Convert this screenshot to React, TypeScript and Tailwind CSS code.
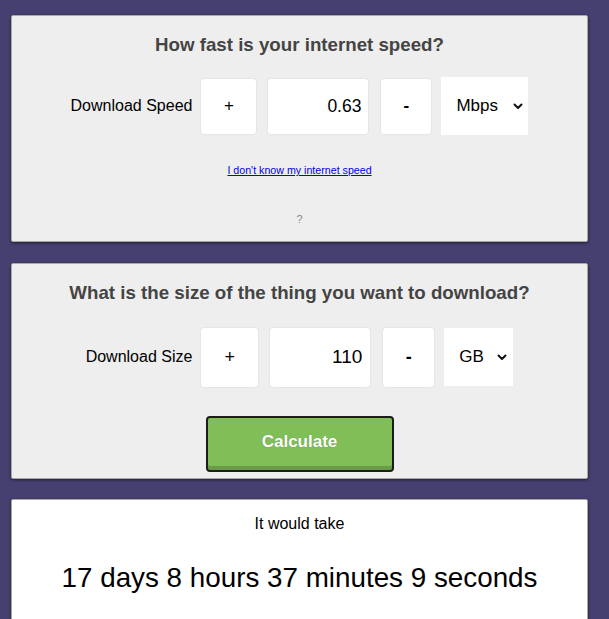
import React from 'react';

const Chevron = () => <svg width="10" height="7" viewBox="0 0 10 7" className="shrink-0">
    <path d="M1.5 1.5 L5 5 L8.5 1.5" fill="none" stroke="#111" strokeWidth="2" strokeLinecap="round" strokeLinejoin="round" />
  </svg>;

const Box = ({
  children,
  className
}: any) => <div className={`flex items-center justify-center bg-white rounded-[3px] shadow-[0_0_2px_rgba(0,0,0,0.12)] ${className}`}>
    {children}
  </div>;

const card = 'w-[577px] border border-[#a8a8a8] shadow-[0_1px_3px_rgba(0,0,0,0.55)] rounded-[2px]';

export default function App() {
  return <div className="min-h-[619px] bg-[#45406f] px-[11px] pt-[15px] pb-[20px] text-black" style={{
    fontFamily: '"Liberation Sans", Arial, sans-serif'
  }}>
      {/* speed */}
      <div className={`${card} bg-[#eeeeee] pt-[18px] pb-[15px] text-center`}>
        <h2 className="text-[18.72px] leading-[22px] font-bold text-[#444]">How fast is your internet speed?</h2>
        <div className="mt-[21px] h-[58px] flex items-center justify-center text-[16px]">
          <span className="mr-[9px]">Download Speed</span>
          <Box className="w-[55px] h-[55px] text-[17px]">+</Box>
          <Box className="ml-[12px] w-[100px] h-[55px] !justify-end pr-[7px] text-[17.5px]">0.63</Box>
          <Box className="ml-[13px] w-[50px] h-[55px] text-[17px] font-bold">-</Box>
          <div className="ml-[10px] w-[87px] h-[58px] bg-white flex items-center justify-between pl-[15px] pr-[5px] text-[17px]">
            <span>Mbps</span>
            <Chevron />
          </div>
        </div>
        <div className="mt-[29px] leading-[13px] text-[10.67px]">
          <a href="#" className="text-[#0000ee] underline">I don't know my internet speed</a>
        </div>
        <div className="mt-[36px] leading-[13px] text-[11px] text-[#888]">?</div>
      </div>

      {/* size */}
      <div className={`${card} mt-[21px] bg-[#eeeeee] pt-[18px] pb-[6px] text-center`}>
        <h2 className="text-[18.72px] leading-[22px] font-bold text-[#444]">What is the size of the thing you want to download?</h2>
        <div className="mt-[23px] h-[60px] flex items-center justify-center text-[16px]">
          <span className="mr-[9px]">Download Size</span>
          <Box className="w-[57px] h-[59px] text-[18px]">+</Box>
          <Box className="ml-[12px] w-[100px] h-[59px] !justify-end pr-[8px] text-[19px]">110</Box>
          <Box className="ml-[13px] w-[51px] h-[59px] text-[18px] font-bold">-</Box>
          <div className="ml-[10px] w-[69px] h-[58px] bg-white flex items-center justify-between pl-[15px] pr-[6px] text-[17px]">
            <span>GB</span>
            <Chevron />
          </div>
        </div>
        <div className="mt-[29px] flex justify-center">
          <button className="w-[188px] h-[56px] border-2 border-[#1c1c1c] rounded-[4px] bg-[#80bf58] shadow-[inset_0_-4px_0_#6b9a48] pb-[4px] text-white font-bold text-[17px] [text-shadow:0_0_1px_rgba(0,0,0,0.3)]">
            Calculate
          </button>
        </div>
      </div>

      {/* result */}
      <div className={`${card} mt-[20px] bg-white pt-[15px] pb-[40px] text-center`}>
        <div className="leading-[18px] text-[16px]">It would take</div>
        <div className="mt-[29px] leading-[32px] text-[27.8px]">17 days 8 hours 37 minutes 9 seconds</div>
      </div>
    </div>;
}
